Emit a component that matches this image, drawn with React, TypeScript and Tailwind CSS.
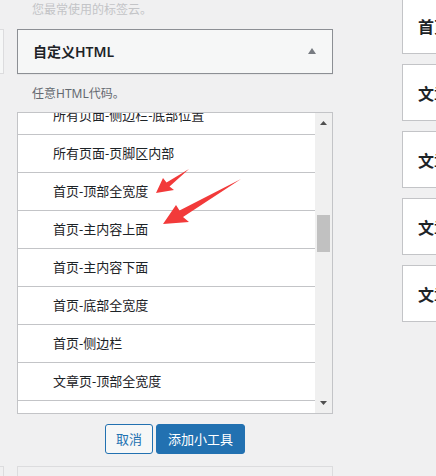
import React from "react";

const rows = [
  "所有页面-侧边栏-底部位置",
  "所有页面-页脚区内部",
  "首页-顶部全宽度",
  "首页-主内容上面",
  "首页-主内容下面",
  "首页-底部全宽度",
  "首页-侧边栏",
  "文章页-顶部全宽度",
  "文章页-主内容上面",
];

const rightBoxes = [
  "文章页-顶部全宽度",
  "文章页-主内容上面",
  "文章页-主内容下面",
  "文章页-侧边栏",
];

export default function App() {
  return (
    <div className="relative w-[436px] h-[476px] overflow-hidden bg-[#f0f0f1] font-['Noto_Sans','Noto_Sans_CJK_SC',sans-serif] text-[#1d2327]">
      <div className="flex items-start">
        {/* left strip */}
        <div className="w-[17px] shrink-0 flex flex-col">
          <div className="mt-[29px] w-[4px] h-[45px] border-y border-r border-[#dcdcde] bg-[#f6f7f7]" />
          <div className="mt-[392px] w-[4px] h-[40px] border-t border-r border-[#dcdcde]" />
        </div>

        {/* main column */}
        <div className="w-[316px] shrink-0 flex flex-col">
          <div className="h-[29px] pl-[15px] text-[12px] leading-[20px] text-[#c3c4c7]">
            您最常使用的标签云。
          </div>
          <div className="h-[45px] border border-[#8c8f94] bg-[#f6f7f7] shadow-[0_1px_1px_rgba(0,0,0,0.04)] flex items-center justify-between pl-[15px] pr-[16px]">
            <span className="text-[14px] font-semibold leading-none">自定义HTML</span>
            <svg width="8" height="6" viewBox="0 0 8 6" className="mt-[-2px]">
              <polygon points="4,0 8,6 0,6" fill="#787c82" />
            </svg>
          </div>
          <div className="mt-[11px] mb-[9px] pl-[15px] text-[12px] leading-[18px] text-[#646970]">
            任意HTML代码。
          </div>
          <div className="h-[302px] border border-[#c3c4c7] bg-white flex overflow-hidden">
            <div className="flex-1 overflow-hidden">
              <div className="mt-[-16px] flex flex-col">
                {rows.map((r) => (
                  <div
                    key={r}
                    className="h-[38px] shrink-0 border-b border-[#c3c4c7] flex items-center pl-[35px] text-[13px] text-[#1d2327]"
                  >
                    {r}
                  </div>
                ))}
              </div>
            </div>
            <div className="w-[17px] shrink-0 bg-[#f0f0f0] flex flex-col items-center">
              <svg width="7" height="4" viewBox="0 0 7 4" className="mt-[8px]">
                <polygon points="3.5,0 7,4 0,4" fill="#505050" />
              </svg>
              <div className="mt-[90px] w-[13px] h-[37px] bg-[#c1c1c1]" />
              <div className="flex-1" />
              <svg width="7" height="4" viewBox="0 0 7 4" className="mb-[8px]">
                <polygon points="0,0 7,0 3.5,4" fill="#505050" />
              </svg>
            </div>
          </div>
          <div className="mt-[10px] flex justify-center gap-[3px]">
            <button className="h-[30px] px-[10px] rounded-[3px] border border-[#2271b1] bg-[#f6f7f7] text-[#2271b1] text-[13px] leading-none">
              取消
            </button>
            <button className="h-[30px] px-[11px] rounded-[3px] border border-[#2271b1] bg-[#2271b1] text-white text-[13px] leading-none">
              添加小工具
            </button>
          </div>
          <div className="mt-[12px] h-[40px] border-t border-x border-[#dcdcde]" />
        </div>

        {/* right column */}
        <div className="ml-[69px] w-[220px] shrink-0 flex flex-col gap-[10px] mt-[-4px]">
          <div className="h-[58px] border border-[#c3c4c7] bg-white flex items-center pl-[15px] pt-[3px] text-[16px] font-semibold whitespace-nowrap">
            首页-顶部全宽度
          </div>
          {rightBoxes.map((t) => (
            <div
              key={t}
              className="h-[57px] border border-[#c3c4c7] bg-white flex items-center pl-[15px] pt-[3px] text-[16px] font-semibold whitespace-nowrap"
            >
              {t}
            </div>
          ))}
        </div>
      </div>

      {/* red arrows overlay */}
      <svg
        className="absolute left-0 top-0 pointer-events-none"
        width="436"
        height="476"
        viewBox="0 0 436 476"
      >
        <polygon
          points="156,193 163,178 166.5,182.5 189,169 169.5,186.5 174,190"
          fill="#f23a3a"
        />
        <polygon
          points="163,224 176,205 179.5,210.5 241,179 183,217 189,222"
          fill="#f23a3a"
        />
      </svg>
    </div>
  );
}
